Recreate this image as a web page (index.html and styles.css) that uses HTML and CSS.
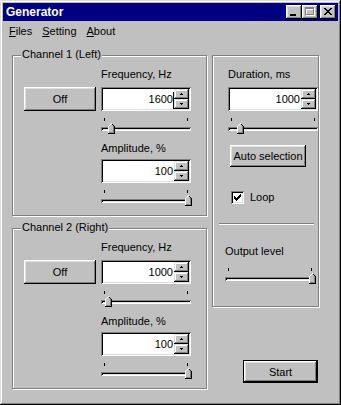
FILE: index.html
```html
<!DOCTYPE html>
<html lang="en">
<head>
  <meta charset="UTF-8">
  <meta name="viewport" content="width=device-width, initial-scale=1.0">
  <title>Generator</title>
  <link rel="stylesheet" href="styles.css">
</head>
<body>

<svg class="defs" width="0" height="0">
  <symbol id="thumb" viewBox="0 0 7 11">
    <path d="M0 3h7v8H0z M1 2h5v1H1z M2 1h3v1H2z M3 0h1v1H3z" fill="#c0c0c0"/>
    <path d="M0 3h1v7H0z M1 2h1v1H1z M2 1h1v1H2z M3 0h1v1H3z" fill="#fff"/>
    <path d="M5 3h1v6H5z M1 9h5v1H1z" fill="#808080"/>
    <path d="M6 3h1v8H6z M0 10h6v1H0z M5 2h1v1H5z M4 1h1v1H4z" fill="#000"/>
  </symbol>
  <symbol id="arrowUp" viewBox="0 0 3 2">
    <path d="M1 0h1v1H1z M0 1h3v1H0z" fill="#000"/>
  </symbol>
  <symbol id="arrowDown" viewBox="0 0 3 2">
    <path d="M0 0h3v1H0z M1 1h1v1H1z" fill="#000"/>
  </symbol>
</svg>

<div class="window">
  <div class="titlebar">
    <span class="title">Generator</span>
    <div class="title-buttons">
      <span class="tbtn">
        <svg width="16" height="14"><path d="M4 9h6v2H4z" fill="#000"/></svg>
      </span>
      <span class="tbtn">
        <svg width="16" height="14">
          <path d="M4 3h9v2H4z M4 5h1v6H4z M12 5h1v6h-1z M4 10h9v1H4z" fill="#fff"/>
          <path d="M3 2h9v2H3z M3 4h1v6H3z M11 4h1v6h-1z M3 9h9v1H3z" fill="#808080"/>
        </svg>
      </span>
      <span class="tbtn close">
        <svg width="16" height="14"><path d="M4 3h2v1H4z M10 3h2v1h-2z M5 4h2v1H5z M9 4h2v1H9z M6 5h4v1H6z M7 6h2v1H7z M6 7h4v1H6z M5 8h2v1H5z M9 8h2v1H9z M4 9h2v1H4z M10 9h2v1h-2z" fill="#000"/></svg>
      </span>
    </div>
  </div>

  <div class="menubar">
    <span class="menu-item"><u>F</u>iles</span>
    <span class="menu-item"><u>S</u>etting</span>
    <span class="menu-item"><u>A</u>bout</span>
  </div>

  <div class="content">
    <div class="left-col">

      <div class="group">
        <span class="group-title">Channel 1 (Left)</span>
        <div class="channel">
          <div><button class="btn off-btn">Off</button></div>
          <div class="controls">
            <div class="label">Frequency, Hz</div>
            <div class="spin">
              <div class="spin-value">1600<span class="caret"></span></div>
              <div class="spin-buttons">
                <span class="spin-btn"><svg width="3" height="2"><use href="#arrowUp"/></svg></span>
                <span class="spin-btn"><svg width="3" height="2"><use href="#arrowDown"/></svg></span>
              </div>
            </div>
            <div class="slider">
              <div class="ticks"><i></i><i></i></div>
              <div class="groove"></div>
              <svg class="thumb" style="left: 7px"><use href="#thumb"/></svg>
            </div>
            <div class="label label-amp">Amplitude, %</div>
            <div class="spin spin-amp">
              <div class="spin-value">100</div>
              <div class="spin-buttons">
                <span class="spin-btn"><svg width="3" height="2"><use href="#arrowUp"/></svg></span>
                <span class="spin-btn"><svg width="3" height="2"><use href="#arrowDown"/></svg></span>
              </div>
            </div>
            <div class="slider">
              <div class="ticks"><i></i><i></i></div>
              <div class="groove"></div>
              <svg class="thumb" style="left: 84px"><use href="#thumb"/></svg>
            </div>
          </div>
        </div>
      </div>

      <div class="group">
        <span class="group-title">Channel 2 (Right)</span>
        <div class="channel">
          <div><button class="btn off-btn">Off</button></div>
          <div class="controls">
            <div class="label">Frequency, Hz</div>
            <div class="spin">
              <div class="spin-value">1000</div>
              <div class="spin-buttons">
                <span class="spin-btn"><svg width="3" height="2"><use href="#arrowUp"/></svg></span>
                <span class="spin-btn"><svg width="3" height="2"><use href="#arrowDown"/></svg></span>
              </div>
            </div>
            <div class="slider">
              <div class="ticks"><i></i><i></i></div>
              <div class="groove"></div>
              <svg class="thumb" style="left: 4px"><use href="#thumb"/></svg>
            </div>
            <div class="label label-amp">Amplitude, %</div>
            <div class="spin spin-amp">
              <div class="spin-value">100</div>
              <div class="spin-buttons">
                <span class="spin-btn"><svg width="3" height="2"><use href="#arrowUp"/></svg></span>
                <span class="spin-btn"><svg width="3" height="2"><use href="#arrowDown"/></svg></span>
              </div>
            </div>
            <div class="slider">
              <div class="ticks"><i></i><i></i></div>
              <div class="groove"></div>
              <svg class="thumb" style="left: 84px"><use href="#thumb"/></svg>
            </div>
          </div>
        </div>
      </div>

    </div>

    <div class="right-col">
      <div class="panel">
        <div class="label duration-label">Duration, ms</div>
        <div class="spin duration-spin">
          <div class="spin-value">1000</div>
          <div class="spin-buttons">
            <span class="spin-btn"><svg width="3" height="2"><use href="#arrowUp"/></svg></span>
            <span class="spin-btn"><svg width="3" height="2"><use href="#arrowDown"/></svg></span>
          </div>
        </div>
        <div class="slider duration-slider">
          <div class="ticks"><i></i><i></i></div>
          <div class="groove"></div>
          <svg class="thumb" style="left: 9px"><use href="#thumb"/></svg>
        </div>
        <button class="btn auto-btn">Auto selection</button>
        <label class="check-row">
          <span class="checkbox">
            <svg width="7" height="7"><path d="M6 0h1v1H6z M5 1h2v1H5z M0 2h1v1H0z M4 2h3v1H4z M0 3h2v1H0z M3 3h3v1H3z M0 4h5v1H0z M1 5h3v1H1z M2 6h1v1H2z" fill="#000"/></svg>
          </span>
          Loop
        </label>
        <div class="separator"></div>
        <div class="label output-label">Output level</div>
        <div class="slider output-slider">
          <div class="ticks"><i></i><i></i></div>
          <div class="groove"></div>
          <svg class="thumb" style="left: 84px"><use href="#thumb"/></svg>
        </div>
      </div>
      <button class="btn default-btn start-btn">Start</button>
    </div>
  </div>
</div>

</body>
</html>
```

FILE: styles.css
```css
body {
  margin: 0;
  font-family: "Liberation Sans", Arial, sans-serif;
  font-size: 11px;
  color: #000;
}

.defs {
  position: absolute;
  width: 0;
  height: 0;
}

/* Window frame */
.window {
  width: 341px;
  height: 405px;
  box-sizing: border-box;
  padding: 3px;
  background-color: #c0c0c0;
  box-shadow: inset -1px -1px #000, inset 1px 1px #dfdfdf,
              inset -2px -2px #808080, inset 2px 2px #fff;
}

.titlebar {
  height: 18px;
  display: flex;
  align-items: center;
  justify-content: space-between;
  padding: 0 2px 0 3px;
  background-color: #000080;
  color: #fff;
}

.title {
  font-weight: bold;
  font-size: 12px;
}

.title-buttons {
  display: flex;
}

.tbtn {
  width: 16px;
  height: 14px;
  display: block;
  background-color: #c0c0c0;
  box-shadow: inset -1px -1px #000, inset 1px 1px #fff,
              inset -2px -2px #808080, inset 2px 2px #dfdfdf;
}

.tbtn svg {
  display: block;
  shape-rendering: crispEdges;
}

.tbtn.close {
  margin-left: 2px;
}

/* Menu */
.menubar {
  height: 19px;
  display: flex;
  align-items: center;
  padding-left: 1px;
}

.menu-item {
  padding: 0 5px;
}

/* Layout */
.content {
  display: grid;
  grid-template-columns: 195px 115px;
  column-gap: 5px;
  align-items: start;
  padding: 15px 0 0 9px;
}

.left-col {
  display: flex;
  flex-direction: column;
  gap: 12px;
}

.right-col {
  display: flex;
  flex-direction: column;
  align-items: flex-start;
}

/* Group boxes */
.group,
.panel {
  position: relative;
  box-sizing: border-box;
  border: 1px solid #808080;
  box-shadow: inset 1px 1px #fff, 1px 1px #fff;
}

.group {
  height: 161px;
}

.group-title {
  position: absolute;
  left: 8px;
  top: -8px;
  padding: 0 1px;
  line-height: 13px;
  background-color: #c0c0c0;
}

.channel {
  display: grid;
  grid-template-columns: 72px 90px;
  column-gap: 5px;
  padding: 12px 0 0 11px;
}

.label {
  line-height: 13px;
  white-space: nowrap;
}

.label-amp {
  margin-top: 6px;
}

/* Buttons */
.btn {
  display: block;
  padding: 0;
  border: none;
  font: inherit;
  color: #000;
  background-color: #c0c0c0;
  box-shadow: inset -1px -1px #000, inset 1px 1px #fff,
              inset -2px -2px #808080, inset 2px 2px #dfdfdf;
}

.default-btn {
  border: 1px solid #000;
}

.off-btn {
  width: 72px;
  height: 24px;
  margin-top: 19px;
}

.auto-btn {
  width: 76px;
  height: 22px;
  margin: 9px 0 0 17px;
}

.start-btn {
  width: 75px;
  height: 23px;
  margin: 53px 0 0 31px;
}

/* Spin edit */
.spin {
  width: 90px;
  height: 24px;
  box-sizing: border-box;
  margin-top: 6px;
  padding: 2px;
  display: flex;
  background-color: #fff;
  box-shadow: inset 1px 1px #808080, inset -1px -1px #fff,
              inset 2px 2px #000, inset -2px -2px #dfdfdf;
}

.spin-amp {
  margin-top: 4px;
}

.spin-value {
  flex: 1;
  line-height: 20px;
  text-align: right;
  padding-right: 1px;
}

.caret {
  display: inline-block;
  width: 1px;
  height: 17px;
  margin-right: -1px;
  vertical-align: middle;
  background-color: #000;
}

.spin-buttons {
  width: 15px;
  display: flex;
  flex-direction: column;
}

.spin-btn {
  flex: 1;
  display: flex;
  align-items: center;
  justify-content: center;
  background-color: #c0c0c0;
  box-shadow: inset -1px -1px #000, inset 1px 1px #dfdfdf,
              inset -2px -2px #808080, inset 2px 2px #fff;
}

.spin-btn svg {
  display: block;
  shape-rendering: crispEdges;
}

/* Track bar */
.slider {
  position: relative;
  width: 90px;
  height: 22px;
  margin-top: 3px;
}

.ticks {
  position: absolute;
  top: 4px;
  left: 3px;
  right: 3px;
  display: flex;
  justify-content: space-between;
}

.ticks i {
  width: 1px;
  height: 3px;
  background-color: #000;
}

.groove {
  position: absolute;
  left: 0;
  right: 0;
  top: 13px;
  height: 4px;
  background-color: #dfdfdf;
  box-shadow: inset 1px 1px #808080, inset -1px -1px #fff, inset 2px 2px #000;
}

.thumb {
  position: absolute;
  top: 9px;
  width: 7px;
  height: 11px;
  shape-rendering: crispEdges;
}

/* Right panel */
.panel {
  height: 252px;
  padding-top: 12px;
  display: flex;
  flex-direction: column;
  align-items: flex-start;
}

.duration-label,
.duration-spin,
.duration-slider {
  margin-left: 15px;
}

.check-row {
  display: flex;
  align-items: center;
  gap: 6px;
  line-height: 13px;
  margin: 24px 0 0 18px;
}

.checkbox {
  width: 13px;
  height: 13px;
  box-sizing: border-box;
  display: flex;
  align-items: center;
  justify-content: center;
  background-color: #fff;
  box-shadow: inset 1px 1px #808080, inset -1px -1px #fff,
              inset 2px 2px #000, inset -2px -2px #dfdfdf;
}

.checkbox svg {
  display: block;
  shape-rendering: crispEdges;
}

.separator {
  align-self: stretch;
  height: 2px;
  box-sizing: border-box;
  margin: 19px 4px 0 6px;
  border-top: 1px solid #808080;
  border-bottom: 1px solid #fff;
}

.output-label {
  margin: 20px 0 0 12px;
}

.output-slider {
  margin: 6px 0 0 12px;
}
```
